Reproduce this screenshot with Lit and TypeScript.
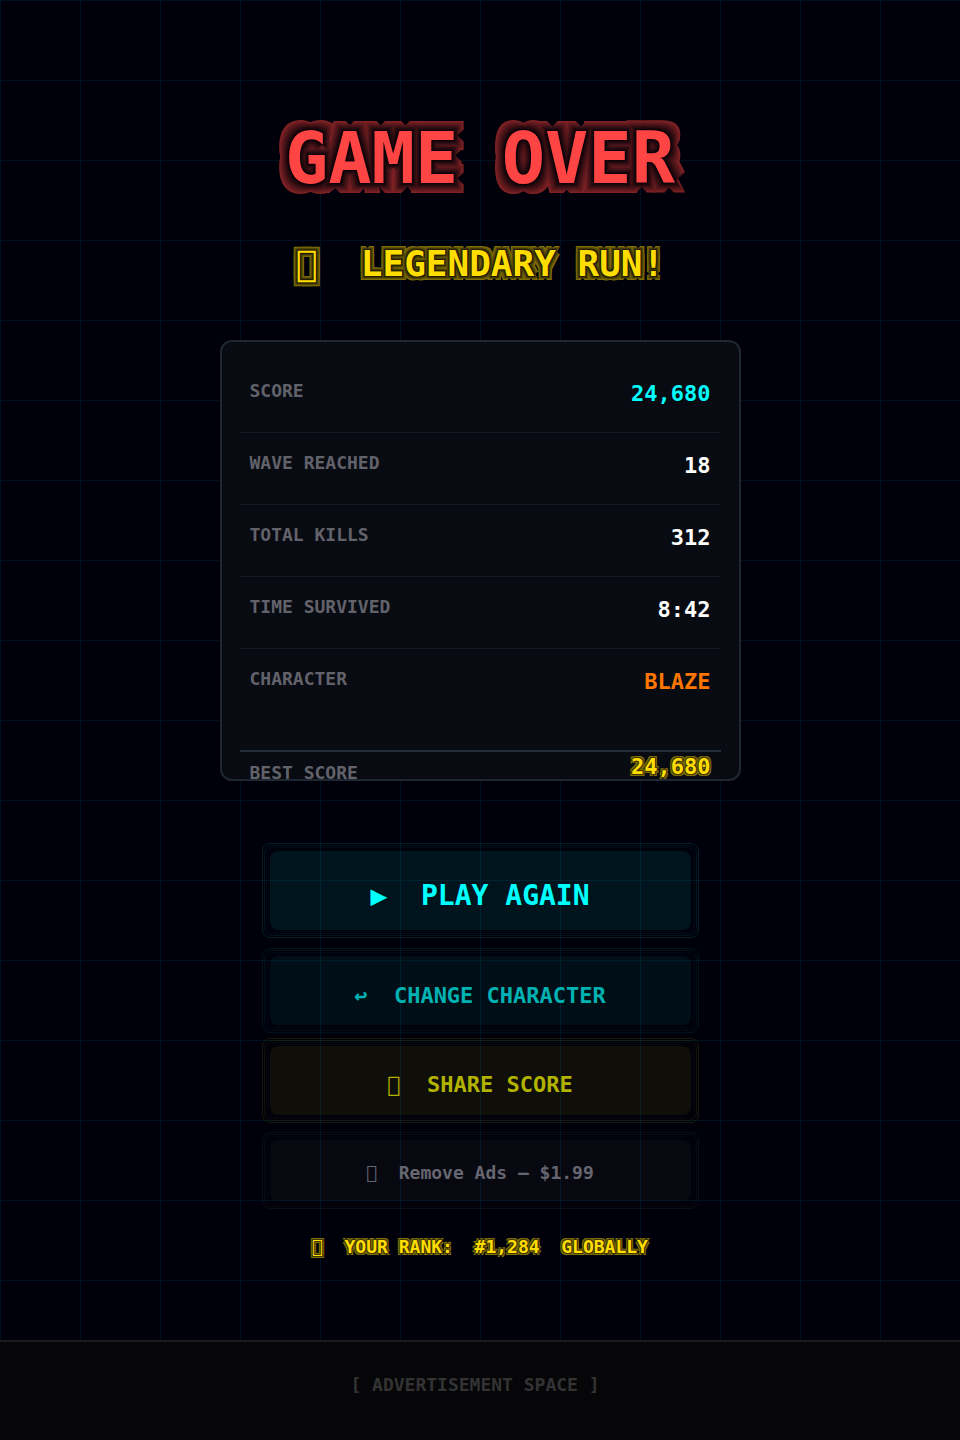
import { LitElement, html, css, unsafeCSS } from "lit";
import { customElement, property } from "lit/decorators.js";

/** Hard-edged neon halo: four diagonal copies per ring, brighter toward the outside. */
function halo(r: number, g: number, b: number, rings: number) {
  const parts: string[] = [];
  for (let i = 1; i <= rings; i++) {
    const k = (0.5 * i) / rings;
    const colour = `rgb(${Math.round(r * k)}, ${Math.round(g * k)}, ${Math.round(b * k + 6 * (1 - k))})`;
    for (const dx of [-i, i]) {
      for (const dy of [-i, i]) {
        parts.push(`${dx}px ${dy}px 0 ${colour}`);
      }
    }
  }
  return unsafeCSS(parts.join(", "));
}

/** Private-use code point that every label uses as its icon slot. */
const ICON = "\uE900";

@customElement("neon-button")
class NeonButton extends LitElement {
  @property() tone = "primary";

  static styles = css`
    :host {
      display: block;
    }
    .button {
      display: block;
      position: relative;
      box-sizing: border-box;
      width: 100%;
      margin: 0;
      border: 0;
      border-radius: 8px;
      background: var(--fill);
      color: var(--ink);
      font-family: "DejaVu Sans Mono", monospace;
      font-weight: 700;
      white-space: pre;
      text-align: center;
      cursor: pointer;
    }
    .button::before,
    .button::after,
    .ring {
      content: "";
      position: absolute;
      border: 1px solid;
      border-radius: 8px;
      pointer-events: none;
    }
    .outer {
      inset: -8px;
      border-color: var(--ring4);
    }
    .button::before {
      inset: -6px;
      border-color: var(--ring3);
    }
    .button::after {
      inset: -4px;
      border-color: var(--ring2);
    }
    .inner {
      inset: -2px;
      border-color: var(--ring1);
    }
    .primary {
      --ink: #00ffff;
      --fill: rgba(0, 255, 255, 0.08);
      --ring4: rgba(0, 255, 255, 0.12);
      --ring3: rgba(0, 255, 255, 0.08);
      --ring2: rgba(0, 255, 255, 0.05);
      --ring1: rgba(0, 255, 255, 0.02);
      padding: 28px 0 17px;
      font-size: 28px;
      line-height: 34px;
    }
    .secondary,
    .share {
      font-size: 22px;
      line-height: 28px;
    }
    .secondary {
      --ink: #00b2b2;
      --fill: rgba(0, 255, 255, 0.055);
      --ring4: rgba(0, 255, 255, 0.08);
      --ring3: rgba(0, 255, 255, 0.06);
      --ring2: rgba(0, 255, 255, 0.04);
      --ring1: rgba(0, 255, 255, 0.02);
      padding: 26px 0 15px;
    }
    .share {
      --ink: #b2b200;
      --fill: rgba(255, 238, 0, 0.06);
      --ring4: rgba(255, 238, 0, 0.1);
      --ring3: rgba(255, 238, 0, 0.07);
      --ring2: rgba(255, 238, 0, 0.04);
      --ring1: rgba(255, 238, 0, 0.02);
      padding: 25px 0 16px;
    }
    .quiet {
      --ink: #666670;
      --fill: rgba(255, 255, 255, 0.03);
      --ring4: rgba(255, 255, 255, 0.05);
      --ring3: rgba(255, 255, 255, 0.04);
      --ring2: rgba(255, 255, 255, 0.02);
      --ring1: rgba(255, 255, 255, 0.01);
      padding: 21px 0 16px;
      font-size: 18px;
      line-height: 24px;
    }
  `;

  render() {
    return html`<button class="button ${this.tone}" type="button"><slot></slot><span class="ring outer"></span><span class="ring inner"></span></button>`;
  }
}

interface Stat {
  label: string;
  value: string;
  tone?: string;
}

@customElement("app-root")
class AppRoot extends LitElement {
  stats: Stat[] = [
    { label: "SCORE", value: "24,680", tone: "cyan" },
    { label: "WAVE REACHED", value: "18" },
    { label: "TOTAL KILLS", value: "312" },
    { label: "TIME SURVIVED", value: "8:42" },
    { label: "CHARACTER", value: "BLAZE", tone: "orange" },
  ];

  static styles = css`
    :host {
      display: flex;
      flex-direction: column;
      min-height: 100vh;
      background: #00000a;
      color: #ffffff;
      font-family: "DejaVu Sans Mono", monospace;
      font-weight: 700;
    }
    .screen {
      flex: 1;
      display: flex;
      flex-direction: column;
      align-items: center;
      box-sizing: border-box;
      padding: 116px 20px 80px;
      background-image: linear-gradient(to right, #001020 1px, transparent 1px),
        linear-gradient(to bottom, #001020 1px, transparent 1px);
      background-size: 80px 80px;
    }
    .title,
    .verdict,
    .rank {
      margin: 0;
      white-space: pre;
    }
    .title {
      font-size: 72px;
      line-height: 84px;
      color: #ff4444;
      text-shadow: ${halo(255, 68, 68, 10)};
    }
    .verdict {
      margin-top: 43px;
      font-size: 36px;
      line-height: 42px;
      color: #ffdd00;
      text-shadow: ${halo(255, 221, 0, 4)};
    }
    .card {
      box-sizing: border-box;
      width: 100%;
      max-width: 521px;
      margin-top: 55px;
      padding: 19px 18px 0;
      border: 2px solid #1f2733;
      border-radius: 12px;
      background: #080b12;
    }
    .stats {
      margin: 0;
    }
    .row {
      display: flex;
      justify-content: space-between;
      align-items: flex-start;
      box-sizing: border-box;
      height: 72px;
      padding: 18px 10px 0;
      border-bottom: 1px solid #141923;
    }
    .row:nth-last-child(2) {
      border-bottom-color: transparent;
    }
    .label {
      font-size: 18px;
      line-height: 24px;
      color: #62626b;
    }
    .value {
      margin: 0;
      font-size: 22px;
      line-height: 30px;
    }
    .cyan {
      color: #00ffff;
    }
    .orange {
      color: #ff7700;
    }
    .best {
      height: 29px;
      margin-top: 29px;
      padding-top: 0;
      border-top: 2px solid #252d3a;
      border-bottom: 0;
    }
    .best .label {
      padding-top: 9px;
    }
    .best .value {
      color: #ffdd00;
      text-shadow: ${halo(255, 221, 0, 2)};
    }
    .actions {
      display: flex;
      flex-direction: column;
      gap: 26px;
      box-sizing: border-box;
      width: 100%;
      max-width: 421px;
      margin-top: 70px;
    }
    .extras {
      display: flex;
      flex-direction: column;
      gap: 25px;
      margin-top: -5px;
    }
    .rank {
      margin-top: 34px;
      font-size: 18px;
      line-height: 24px;
      color: #ffdd00;
      text-shadow: ${halo(255, 221, 0, 2)};
    }
    .ad {
      box-sizing: border-box;
      height: 100px;
      padding: 31px 10px 0 0;
      border-top: 2px solid #1b1b1d;
      background: #060608;
      color: #333333;
      font-size: 18px;
      line-height: 24px;
      text-align: center;
    }
  `;

  render() {
    return html`
      <main class="screen">
        <h1 class="title">GAME OVER</h1>
        <p class="verdict">${ICON + "  LEGENDARY RUN!"}</p>
        <section class="card" aria-label="Run summary">
          <dl class="stats">
            ${this.stats.map(
              (s) => html`<div class="row">
                <dt class="label">${s.label}</dt>
                <dd class="value ${s.tone ?? ""}">${s.value}</dd>
              </div>`
            )}
            <div class="row best">
              <dt class="label">BEST SCORE</dt>
              <dd class="value">24,680</dd>
            </div>
          </dl>
        </section>
        <div class="actions">
          <neon-button tone="primary">${"▶  PLAY AGAIN"}</neon-button>
          <neon-button tone="secondary">${"↩  CHANGE CHARACTER"}</neon-button>
          <div class="extras">
            <neon-button tone="share">${ICON + "  SHARE SCORE"}</neon-button>
            <neon-button tone="quiet">${ICON + "  Remove Ads — $1.99"}</neon-button>
          </div>
        </div>
        <p class="rank">${ICON + "  YOUR RANK:  #1,284  GLOBALLY"}</p>
      </main>
      <footer class="ad">[ ADVERTISEMENT SPACE ]</footer>
    `;
  }
}
